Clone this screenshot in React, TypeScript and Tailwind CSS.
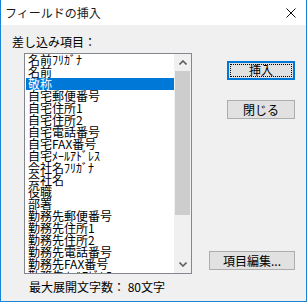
const items = [
  "名前ﾌﾘｶﾞﾅ",
  "名前",
  "敬称",
  "自宅郵便番号",
  "自宅住所1",
  "自宅住所2",
  "自宅電話番号",
  "自宅FAX番号",
  "自宅ﾒｰﾙｱﾄﾞﾚｽ",
  "会社名ﾌﾘｶﾞﾅ",
  "会社名",
  "役職",
  "部署",
  "勤務先郵便番号",
  "勤務先住所1",
  "勤務先住所2",
  "勤務先電話番号",
  "勤務先FAX番号",
  "勤務先ﾒｰﾙｱﾄﾞﾚｽ",
  "備考",
];

const selected = 2;

function DialogButton({
  children,
  primary,
  width,
}: {
  children: React.ReactNode;
  primary?: boolean;
  width: string;
}) {
  if (primary) {
    return (
      <button
        className={`${width} h-[19px] border-2 border-[#0078d7] bg-[#e1e1e1] p-px`}
        type="button"
      >
        <span className="flex h-full w-full items-center justify-center border border-dotted border-black text-[12px] leading-[12px] text-black">
          {children}
        </span>
      </button>
    );
  }

  return (
    <button
      className={`${width} flex h-[19px] items-center justify-center border border-[#adadad] bg-[#e1e1e1] text-[12px] leading-[12px] text-black`}
      type="button"
    >
      {children}
    </button>
  );
}

function Chevron({ up }: { up?: boolean }) {
  return (
    <svg height="5" viewBox="0 0 8 5" width="8">
      <path
        d={up ? "M0.5 4.5 L4 1 L7.5 4.5" : "M0.5 0.5 L4 4 L7.5 0.5"}
        fill="none"
        stroke="#606060"
        strokeWidth="1.6"
      />
    </svg>
  );
}

export default function App() {
  return (
    <div
      className="flex h-[302px] w-[307px] flex-col border-x border-b border-[#1883d7] bg-[#f0f0f0] text-black"
      style={{ fontFamily: '"Noto Sans CJK JP", "Noto Sans", sans-serif' }}
    >
      <div className="flex h-[25px] shrink-0 items-center justify-between bg-white pl-[4px] pr-[10px]">
        <span className="text-[12px] leading-[12px] text-[#1a1a1a]">
          フィールドの挿入
        </span>
        <svg height="10" viewBox="0 0 10 10" width="10">
          <path d="M0.5 0.5 L9.5 9.5 M9.5 0.5 L0.5 9.5" stroke="#111" strokeWidth="1" />
        </svg>
      </div>

      <div className="flex flex-1">
        <div className="flex flex-col">
          <p className="ml-[11px] mt-[11px] text-[12px] leading-[12px]">
            差し込み項目：
          </p>
          <div className="ml-[23px] mt-[5px] flex h-[221px] w-[168px] border border-[#828790] bg-white">
            <div className="flex-1 overflow-hidden pl-px">
              {items.map((item, i) => (
                <div
                  className={`h-[12px] whitespace-nowrap pl-[2px] text-[12px] leading-[12px] ${
                    i === selected ? "bg-[#0078d7] text-white" : "text-black"
                  }`}
                  key={item}
                >
                  {item}
                </div>
              ))}
            </div>
            <div className="flex w-[17px] flex-col bg-[#f0f0f0]">
              <div className="flex h-[17px] items-center justify-center">
                <Chevron up />
              </div>
              <div className="mx-px h-[144px] bg-[#cdcdcd]" />
              <div className="flex-1" />
              <div className="flex h-[17px] items-center justify-center">
                <Chevron />
              </div>
            </div>
          </div>
          <p className="ml-[28px] mt-[7px] text-[12px] leading-[12px]">
            最大展開文字数： 80文字
          </p>
        </div>

        <div className="ml-auto flex flex-col items-end pr-[11px]">
          <div className="mt-[31px]">
            <DialogButton primary width="w-[68px]">
              挿入
            </DialogButton>
          </div>
          <div className="mt-[20px]">
            <DialogButton width="w-[68px]">閉じる</DialogButton>
          </div>
          <div className="mb-[31px] mt-auto">
            <DialogButton width="w-[86px]">項目編集...</DialogButton>
          </div>
        </div>
      </div>
    </div>
  );
}
